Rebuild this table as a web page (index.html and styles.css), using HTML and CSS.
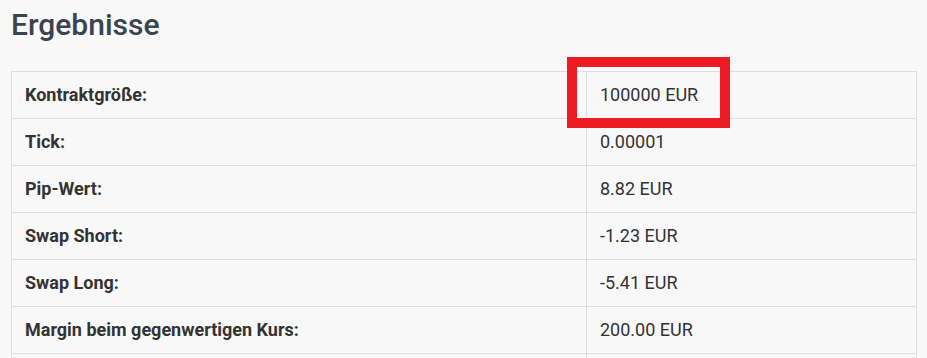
FILE: index.html
```html
<!DOCTYPE html>
<html lang="de">
<head>
<meta charset="utf-8">
<link rel="stylesheet" href="styles.css">
</head>
<body>
<div class="page">
  <h2 class="title">Ergebnisse</h2>
  <div class="results">
    <table class="table">
      <tbody>
        <tr><th>Kontraktgröße:</th><td class="hl">100000 EUR</td></tr>
        <tr><th>Tick:</th><td>0.00001</td></tr>
        <tr><th>Pip-Wert:</th><td>8.82 EUR</td></tr>
        <tr><th>Swap Short:</th><td>-1.23 EUR</td></tr>
        <tr><th>Swap Long:</th><td>-5.41 EUR</td></tr>
        <tr><th>Margin beim gegenwertigen Kurs:</th><td>200.00 EUR</td></tr>
        <tr><th>&nbsp;</th><td>&nbsp;</td></tr>
      </tbody>
    </table>
  </div>
</div>
</body>
</html>
```
FILE: styles.css
```css
html, body {
  margin: 0;
  padding: 0;
  background: #f8f8f8;
}
body {
  font-family: Roboto, "Liberation Sans", Arial, sans-serif;
  color: #333;
  overflow: hidden;
}
.page {
  padding: 0 10px 0 11px;
}
.title {
  margin: 0;
  padding-top: 7px;
  font-size: 30px;
  font-weight: 500;
  line-height: 36px;
  color: #3a4350;
}
.results {
  margin-top: 28px;
}
.table {
  width: 906px;
  border-collapse: collapse;
  border: 1px solid #ddd;
}
.table th,
.table td {
  height: 46px;
  padding: 0;
  border-top: 1px solid #ddd;
  font-size: 18px;
  line-height: 22px;
  vertical-align: middle;
  text-align: left;
}
.table th {
  width: 561px;
  padding-left: 13px;
  font-weight: 700;
  color: #333;
  border-right: 1px solid #ddd;
}
.table td {
  padding-left: 13px;
  font-weight: 400;
  color: #333;
}
.hl {
  position: relative;
}
.hl::after {
  content: "";
  position: absolute;
  left: -20px;
  top: -15px;
  width: 143px;
  height: 51px;
  border: 10px solid #ed1c24;
}
```
